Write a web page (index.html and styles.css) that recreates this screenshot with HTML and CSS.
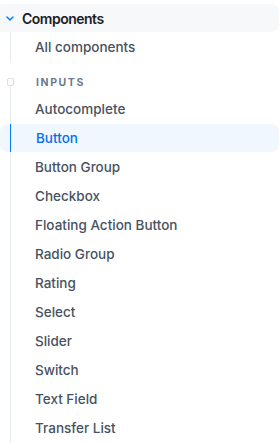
FILE: index.html
```html
<!DOCTYPE html>
<html lang="en">
<head>
  <meta charset="UTF-8">
  <title>Components nav</title>
  <link rel="stylesheet" href="styles.css">
</head>
<body>

<nav class="nav">
  <div class="nav-head">
    <svg class="chevron" viewBox="0 0 8 5"><path d="M1 1 4 4 7 1"/></svg>
    <span>Components</span>
  </div>

  <ul class="group">
    <li class="item">All components</li>
  </ul>

  <div class="section">
    <span class="marker"></span>
    <span class="section-title">INPUTS</span>
  </div>

  <ul class="group inputs">
    <li class="item">Autocomplete</li>
    <li class="item active">Button</li>
    <li class="item">Button Group</li>
    <li class="item">Checkbox</li>
    <li class="item">Floating Action Button</li>
    <li class="item">Radio Group</li>
    <li class="item">Rating</li>
    <li class="item">Select</li>
    <li class="item">Slider</li>
    <li class="item">Switch</li>
    <li class="item">Text Field</li>
    <li class="item">Transfer List</li>
  </ul>
</nav>

</body>
</html>
```

FILE: styles.css
```css
body {
  margin: 0;
  background: #fff;
  font-family: Inter, "Noto Sans", sans-serif;
  overflow: hidden;
}

.nav {
  padding-top: 4px;
  width: 279px;
}

.nav-head {
  display: flex;
  align-items: center;
  height: 28px;
  background: #f6f8fa;
  border-radius: 0 8px 8px 0;
  color: #1c2025;
  font-size: 14px;
  font-weight: 600;
  letter-spacing: -0.5px;
}

.chevron {
  width: 8px;
  height: 5px;
  margin: 0 8px 0 6px;
  fill: none;
  stroke: #007fff;
  stroke-width: 1.5;
  stroke-linecap: round;
  stroke-linejoin: round;
}

.group {
  list-style: none;
  margin: 0 0 0 10px;
  padding: 1px 0;
  border-left: 1px solid #e5eaf2;
  display: flex;
  flex-direction: column;
  gap: 1px;
}

.group.inputs {
  padding-top: 0;
}

.item {
  height: 28px;
  display: flex;
  align-items: center;
  padding-left: 25px;
  margin-left: -1px;
  font-size: 13.5px;
  font-weight: 500;
  color: #47525f;
  position: relative;
}

.item.active {
  color: #0072e5;
  background: #f0f7ff;
  border-left: 1px solid #007fff;
  border-radius: 0 8px 8px 0;
}

.item.active::before {
  content: "";
  position: absolute;
  left: -11px;
  top: 0;
  bottom: 0;
  width: 10px;
  background: #f0f7ff;
  border-radius: 8px 0 0 8px;
}

.section {
  display: flex;
  align-items: center;
  height: 26px;
  padding: 7px 0 0 7px;
  position: relative;
}

/* short stub joining the marker to the list line */
.section::after {
  content: "";
  position: absolute;
  left: 10px;
  top: 24px;
  bottom: 0;
  width: 1px;
  background: #e5eaf2;
}

.marker {
  width: 5px;
  height: 6px;
  border: 1px solid #d8dee7;
  border-radius: 2px;
  margin-right: 22px;
}

.section-title {
  font-size: 10.5px;
  font-weight: 700;
  letter-spacing: 1.6px;
  color: #6b7a90;
}
```
